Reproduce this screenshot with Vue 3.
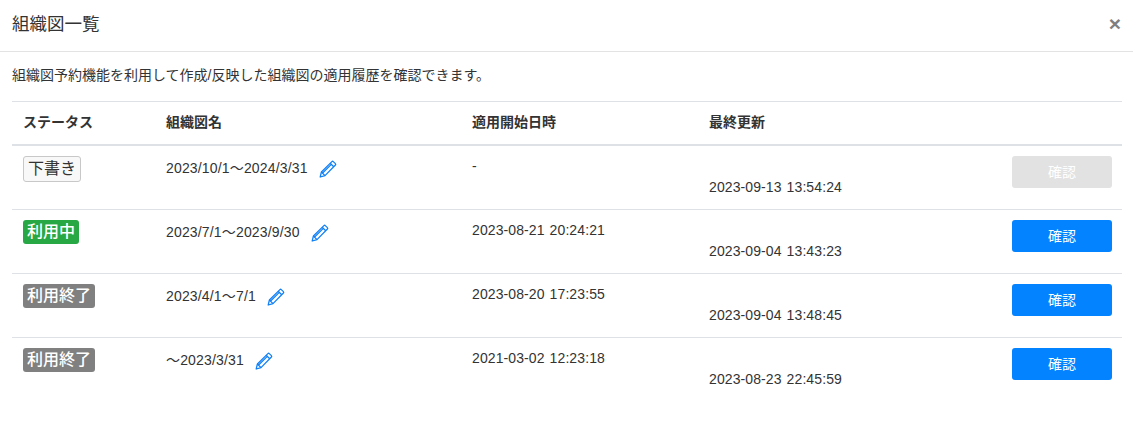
<script setup>
const rows = [
  { status: '下書き', kind: 'draft', name: '2023/10/1〜2024/3/31', start: '-', updated: '2023-09-13 13:54:24', disabled: true },
  { status: '利用中', kind: 'active', name: '2023/7/1〜2023/9/30', start: '2023-08-21 20:24:21', updated: '2023-09-04 13:43:23' },
  { status: '利用終了', kind: 'ended', name: '2023/4/1〜7/1', start: '2023-08-20 17:23:55', updated: '2023-09-04 13:48:45' },
  { status: '利用終了', kind: 'ended', name: '〜2023/3/31', start: '2021-03-02 12:23:18', updated: '2023-08-23 22:45:59' },
]
</script>

<template>
  <div class="modal">
    <header class="head">
      <h1>組織図一覧</h1>
      <span class="close">×</span>
    </header>
    <div class="body">
      <p class="desc">組織図予約機能を利用して作成/反映した組織図の適用履歴を確認できます。</p>
      <table>
        <colgroup>
          <col class="c1" /><col class="c2" /><col class="c3" /><col class="c4" /><col />
        </colgroup>
        <thead>
          <tr>
            <th>ステータス</th>
            <th>組織図名</th>
            <th>適用開始日時</th>
            <th>最終更新</th>
            <th></th>
          </tr>
        </thead>
        <tbody>
          <tr v-for="r in rows" :key="r.updated">
            <td><span class="badge" :class="r.kind">{{ r.status }}</span></td>
            <td class="name">
              <span>{{ r.name }}</span>
              <svg class="pen" width="18" height="18" viewBox="0 0 18 18" fill="none" stroke="#0f7ff5" stroke-width="1.25" stroke-linejoin="round">
                <path d="M1.2 17l1.2-5L12.9 1.6a1 1 0 0 1 1.4 0l2.1 2a1 1 0 0 1 0 1.4L6 15.6z" />
                <path d="M2.4 12l3.6 3.6M11.2 3.3l3.5 3.5M3.6 13l8.7-8.6" />
              </svg>
            </td>
            <td class="stamp">{{ r.start }}</td>
            <td class="stamp"><br />{{ r.updated }}</td>
            <td class="act"><button :class="{ off: r.disabled }">確認</button></td>
          </tr>
        </tbody>
      </table>
    </div>
  </div>
</template>

<style>
html, body { margin: 0; background: #fff; }
</style>

<style scoped>
.modal {
  font-family: "Liberation Sans", "Noto Sans CJK JP", sans-serif;
  font-size: 14px;
  line-height: 21px;
  color: #333;
}
.head {
  display: flex;
  justify-content: space-between;
  align-items: flex-start;
  padding: 11px 12px 0;
  height: 40px;
  border-bottom: 1px solid #e3e3e3;
}
h1 {
  margin: 0;
  font-size: 17.5px;
  line-height: 26px;
  font-weight: 400;
}
.close {
  font-size: 21px;
  line-height: 26px;
  font-weight: 700;
  color: #7f7f7f;
}
.body { padding: 0 11px 0 12px; }
.desc {
  margin: 0;
  height: 49px;
  padding-top: 13px;
  box-sizing: border-box;
  font-size: 14px;
}
table {
  width: 100%;
  border-collapse: collapse;
  table-layout: fixed;
}
.c1 { width: 143px; }
.c2 { width: 306px; }
.c3 { width: 237px; }
.c4 { width: 220px; }
th {
  height: 43px;
  padding: 0 11px;
  box-sizing: border-box;
  text-align: left;
  font-weight: 700;
  font-size: 14px;
  border-top: 1px solid #dee2e6;
  border-bottom: 2px solid #dee2e6;
}
td {
  box-sizing: border-box;
  padding: 10px 11px 11px;
  vertical-align: top;
  font-size: 14px;
  border-bottom: 1px solid #dee2e6;
}
tbody tr:last-child td { border-bottom: 0; }
.badge {
  display: block;
  width: fit-content;
  padding: 0 4px;
  height: 24px;
  line-height: 24px;
  font-size: 16px;
  border-radius: 3px;
  box-sizing: border-box;
  color: #fff;
  font-weight: 500;
}
.draft {
  color: #333;
  font-weight: 400;
  height: 26px;
  background: #f8f8f8;
  border: 1px solid #c8c8c8;
}
.active { background: #28a745; }
.ended { background: #808080; }
.name {
  white-space: nowrap;
  letter-spacing: 0.16px;
  padding-top: 12px;
  padding-bottom: 9px;
}
.stamp { letter-spacing: 0.1px; word-spacing: 1px; }
.pen { margin-left: 11px; vertical-align: -5px; }
.act { text-align: right; padding-right: 10px; }
button {
  display: inline-block;
  vertical-align: top;
  width: 100px;
  height: 32px;
  border: 0;
  padding: 1px 0 0;
  border-radius: 3px;
  background: #0383ff;
  color: #fff;
  font: inherit;
  font-size: 14px;
}
button.off { background: #e2e2e2; }
</style>
